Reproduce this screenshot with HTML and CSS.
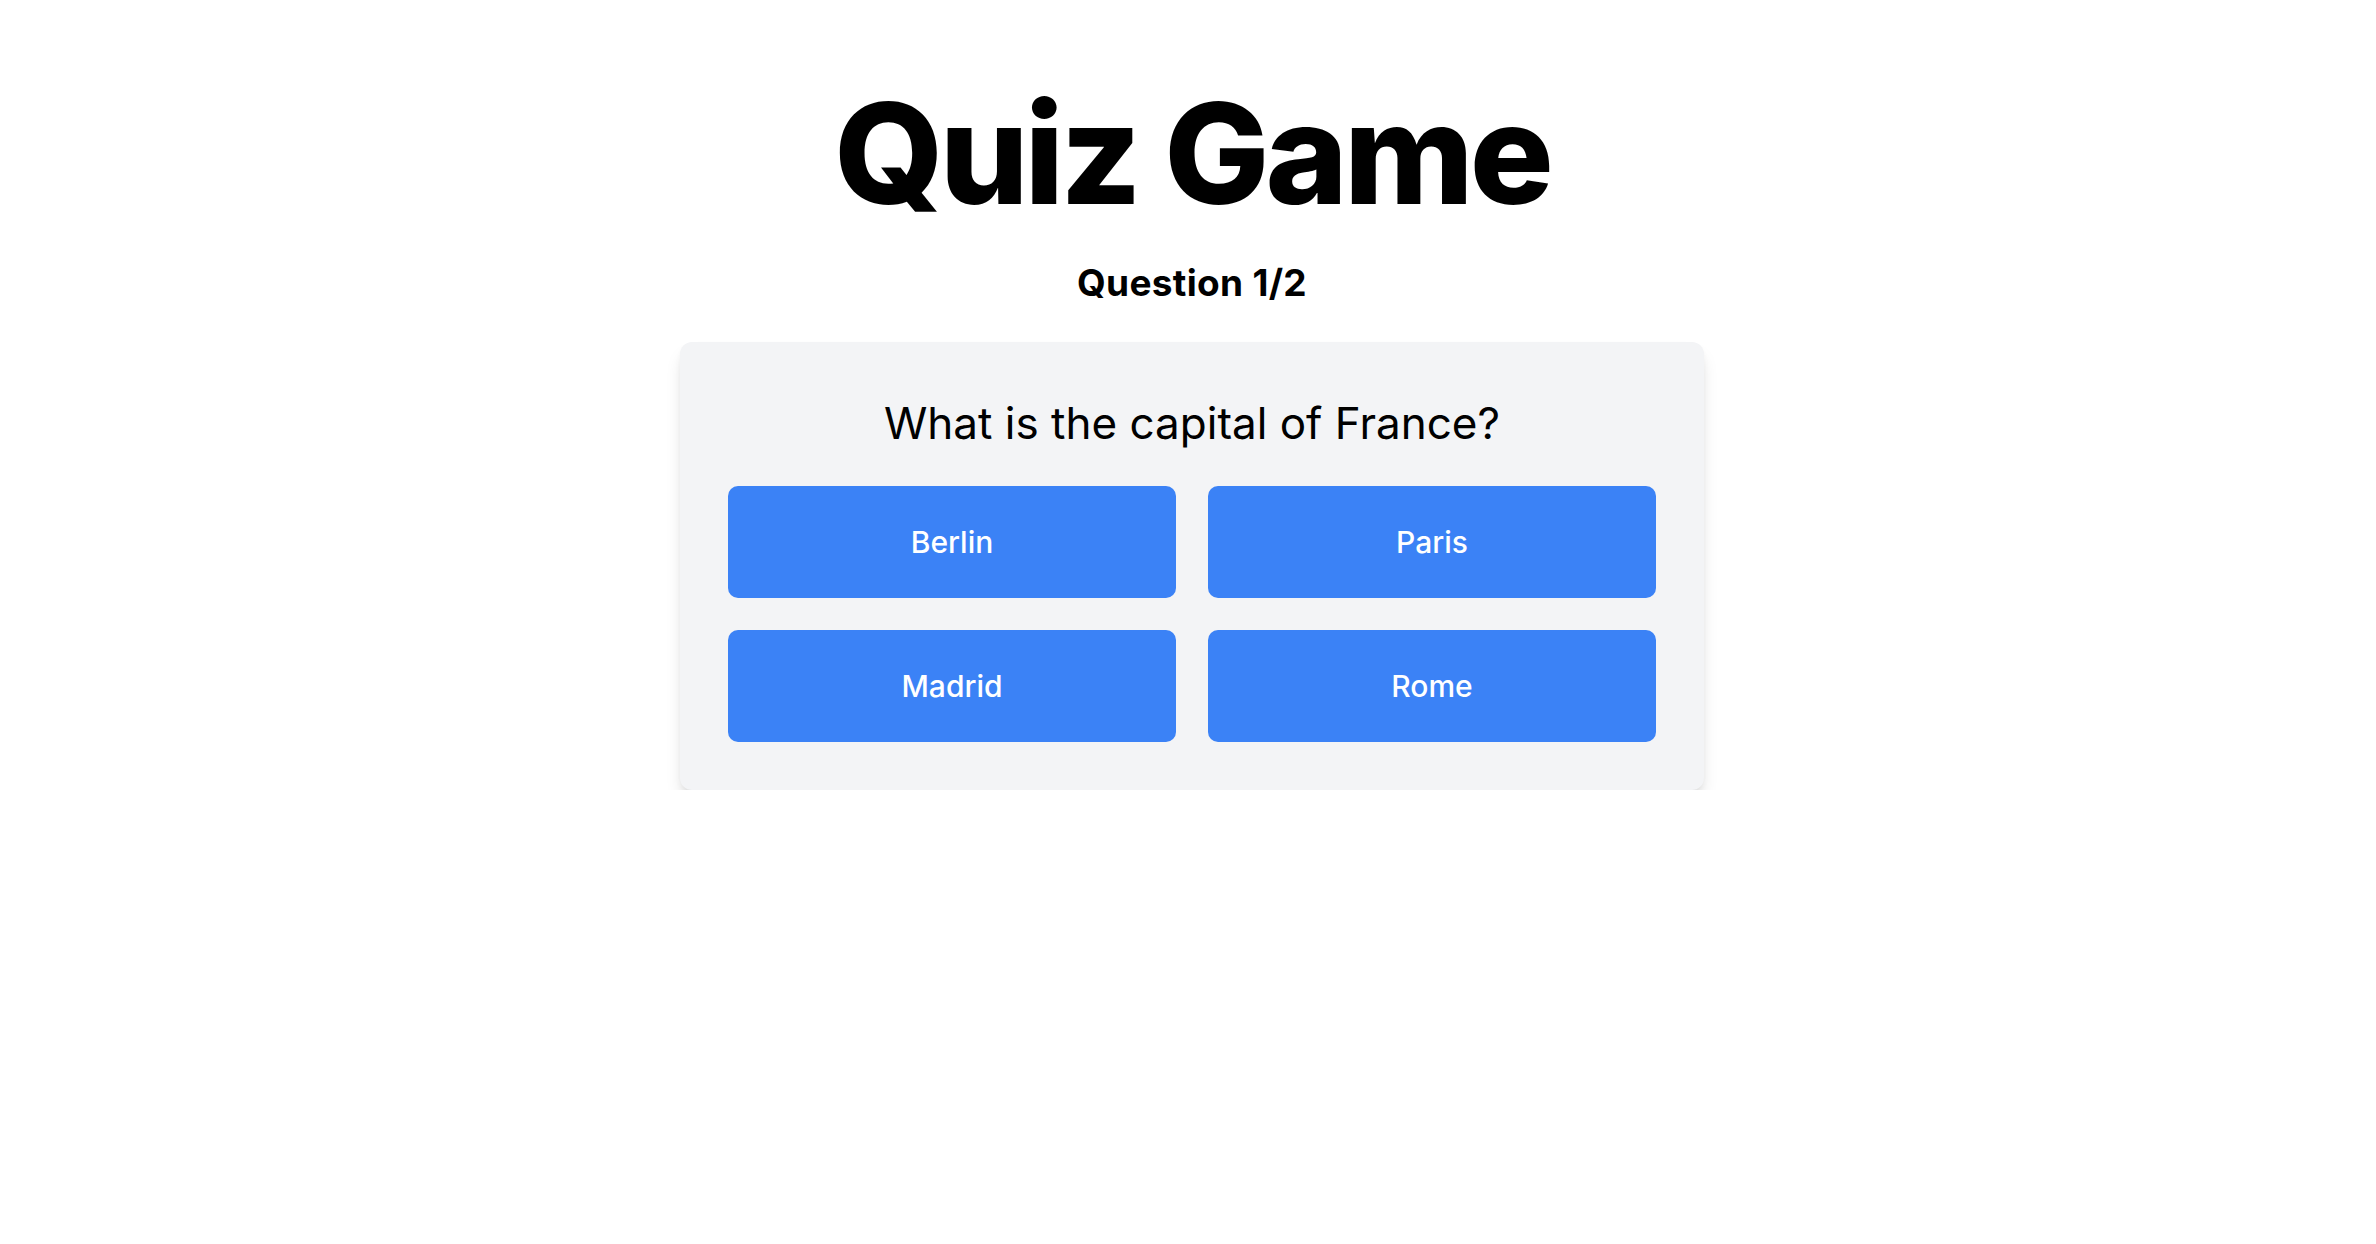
FILE: index.html
```html
<!DOCTYPE html>
<html lang="en">
<head>
<meta charset="utf-8">
<title>Quiz Game</title>
<link rel="stylesheet" href="styles.css">
</head>
<body>
<main class="page">
  <h1 class="title">Quiz Game</h1>
  <h2 class="progress">Question 1/2</h2>
  <section class="card">
    <p class="question">What is the capital of France?</p>
    <div class="answers">
      <button class="answer">Berlin</button>
      <button class="answer">Paris</button>
      <button class="answer">Madrid</button>
      <button class="answer">Rome</button>
    </div>
  </section>
</main>
</body>
</html>
```
FILE: styles.css
```css
* { box-sizing: border-box; }
html, body { margin: 0; padding: 0; background: #ffffff; }
body {
  font-family: Inter, "Noto Sans", "Liberation Sans", sans-serif;
  color: #000;
}
.page {
  display: flex;
  flex-direction: column;
  align-items: center;
  padding: 83px 0 0 8px;
}
.title {
  margin: 0;
  font-size: 140px;
  line-height: 1;
  font-weight: 800;
  letter-spacing: -4px;
}
.progress {
  margin: 36px 0 0;
  font-size: 37px;
  line-height: 48px;
  font-weight: 700;
  letter-spacing: 0.3px;
}
.card {
  margin-top: 35px;
  width: 1024px;
  background: #f3f4f6;
  border-radius: 12px;
  padding: 48px;
  box-shadow: 0 12px 18px -4px rgba(0,0,0,0.15), 0 4px 8px -4px rgba(0,0,0,0.12);
}
.question {
  margin: 0 0 30px;
  text-align: center;
  font-size: 44px;
  line-height: 66px;
  font-weight: 400;
}
.answers {
  display: grid;
  grid-template-columns: 1fr 1fr;
  gap: 32px;
}
.answer {
  height: 112px;
  border: 0;
  border-radius: 10px;
  background: #3b82f6;
  color: #fff;
  font-family: inherit;
  font-size: 30px;
  font-weight: 500;
}
```
